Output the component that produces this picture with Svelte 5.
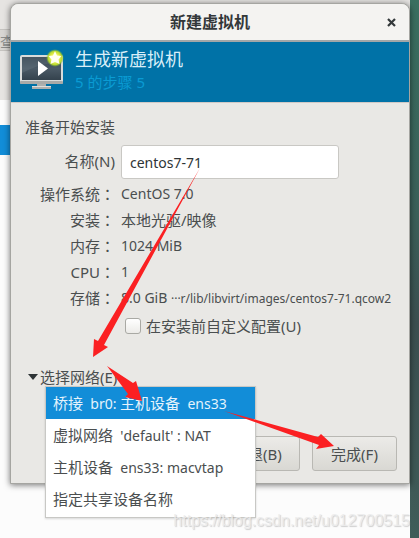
<script lang="ts">
  let name = $state("centos7-71");
  let customize = $state(false);
  let selected = $state(0);

  const details = [
    { label: "操作系统", value: "CentOS 7.0" },
    { label: "安装", value: "本地光驱/映像", cjk: true },
    { label: "内存", value: "1024 MiB" },
    { label: "CPU", value: "1" },
    { label: "存储", value: "8.0 GiB", path: "···r/lib/libvirt/images/centos7-71.qcow2" },
  ];

  const networks = [
    ["桥接", "  br0: ", "主机设备", "  ens33"],
    ["虚拟网络", "  'default' : NAT"],
    ["主机设备", "  ens33: macvtap"],
    ["指定共享设备名称"],
  ];
</script>

<div class="desktop">
  <div class="manager">
    <div class="toolbar"><div class="search">查</div></div>
    <div class="row"></div>
  </div>

  <div class="dialog">
    <header>
      <h1>新建虚拟机</h1>
      <button class="close" aria-label="关闭">
        <svg width="9" height="9" viewBox="0 0 9 9"><path d="M1 1 8 8M8 1 1 8" stroke="#33383a" stroke-width="2.2" /></svg>
      </button>
    </header>

    <div class="banner">
      <svg width="46" height="44" viewBox="0 0 46 44">
        <defs>
          <linearGradient id="screen" x1="0" y1="0" x2="0" y2="1">
            <stop offset="0" stop-color="#34434f" />
            <stop offset="0.5" stop-color="#4b5a66" />
            <stop offset="1" stop-color="#34424d" />
          </linearGradient>
          <radialGradient id="glow">
            <stop offset="0.4" stop-color="#f2f45c" />
            <stop offset="0.75" stop-color="#b9d92c" />
            <stop offset="1" stop-color="#6fb33a" stop-opacity="0" />
          </radialGradient>
        </defs>
        <rect x="0" y="7" width="43" height="29" rx="2" fill="#d9dbda" />
        <rect x="0" y="33" width="43" height="3" rx="1" fill="#a9aaa8" />
        <rect x="2" y="9" width="39" height="23" fill="url(#screen)" />
        <path d="M2 9H41V13Q19 16 2 25Z" fill="#70808b" opacity="0.3" />
        <path d="M18 13 28 20.500 18 28Z" fill="#fff" />
        <path d="M17 36H26V38H31V41H12V38H17Z" fill="#aeb0ae" />
        <rect x="12" y="38" width="19" height="1" fill="#dededc" />
        <circle cx="35" cy="10" r="9" fill="url(#glow)" />
        <path d="M35 3 37 7.500 41.500 8 38.500 11.500 39.500 16 35 14 30.500 16 31.500 11.500 28.500 8 33 7.500Z" fill="#fffff0" />
      </svg>
      <div>
        <h2>生成新虚拟机</h2>
        <p>5 的步骤 5</p>
      </div>
    </div>

    <form onsubmit={(e) => e.preventDefault()}>
      <h3>准备开始安装</h3>
      <div class="fields">
        <label for="vm-name">名称(N)</label>
        <input id="vm-name" class="entry" type="text" bind:value={name} />
        {#each details as item}
          <span class="key">{item.label}<span class="colon">：</span></span>
          <span class="value" class:cjk={item.cjk}>
            {item.value}
            {#if item.path}<small>{item.path}</small>{/if}
          </span>
        {/each}
      </div>

      <label class="check">
        <input type="checkbox" bind:checked={customize} />
        在安装前自定义配置(U)
      </label>

      <div class="network">
        <button type="button" class="expander">
          <svg width="10" height="6" viewBox="0 0 10 6"><path d="M0 0H10L5 6Z" fill="#2e3436" /></svg>
          选择网络(E)
        </button>
        <div class="menu">
          {#each networks as parts, i}
            <button type="button" class:active={selected === i} onclick={() => (selected = i)}>
              {#each parts as part, j}<span class:latin={j % 2 === 1}>{part}</span>{/each}
            </button>
          {/each}
        </div>
      </div>

      <footer>
        <button type="button">后退(B)</button>
        <button type="submit">完成(F)</button>
      </footer>
    </form>
  </div>

  <!-- annotation arrows -->
  <svg class="arrows" width="419" height="538" viewBox="0 0 419 538" fill="#fb2022">
    <path d="M200 168 104 345 108 347 93 357 94 339 98 341Z" />
    <path d="M107 366 133 383 136 381 142 401 125 397 128 394Z" />
    <path d="M224 411 318 437 321 434 334 446 316 449 319 445Z" />
  </svg>
  <div class="watermark">https://blog.csdn.net/u012700515</div>
</div>

<style>
  :global(body) {
    background: #fcfcfc;
  }

  .desktop {
    position: relative;
    display: grid;
    min-height: 100vh;
    overflow: hidden;
    background: linear-gradient(#3a6f60, #3b6059 40%, #3c4f50 60%, #3f5d59);
    color: #4a4e4f;
    font-family: "Noto Sans", "Noto Sans CJK SC", sans-serif;
    font-size: 15px;
    line-height: 26px;
  }

  .manager,
  .dialog {
    grid-area: 1 / 1;
  }

  .manager {
    margin-right: 9px;
    background: #fcfcfc;
  }

  .toolbar {
    box-sizing: border-box;
    height: 100px;
    padding-top: 29px;
    background: #e6e4e2;
  }

  .search {
    height: 20px;
    border: 1px solid #c5c3c0;
    border-left: 0;
    background: #d8d6d3;
    color: #8b8d8c;
    font-size: 14px;
    line-height: 24px;
  }

  .row {
    height: 30px;
    margin-top: 25px;
    background: #128dd8;
  }

  .dialog {
    align-self: start;
    margin: 3px 9px 0 10px;
    border: 1px solid #a5a5a1;
    border-radius: 8px 8px 0 0;
    background: #e9e8e5;
    box-shadow: 0 1px 6px rgba(0, 0, 0, 0.55);
  }

  h1,
  h2,
  h3,
  p {
    margin: 0;
    font-weight: normal;
  }

  button {
    font: inherit;
    color: inherit;
  }

  header {
    display: grid;
    grid-template-columns: 28px 1fr 28px;
    align-items: center;
    height: 36px;
    border-bottom: 2px solid #a3a7a8;
    border-radius: 8px 8px 0 0;
    background: #f4f3f1;
  }

  h1 {
    grid-column: 2;
    color: #33383a;
    font-size: 16px;
    font-weight: bold;
    text-align: center;
  }

  .close {
    display: flex;
    padding: 6px;
    border: 0;
    background: none;
  }

  .banner {
    display: flex;
    gap: 9px;
    height: 54px;
    padding: 6px 9px 0;
    border-bottom: 1px solid #d0c9c6;
    background: #0072a7;
  }

  h2 {
    color: #d9eef8;
    font-size: 18px;
    line-height: 22px;
  }

  p {
    color: #0a9bd3;
    line-height: 24px;
  }

  h3 {
    font-size: 15px;
  }

  form {
    padding: 11px 12px 12px 14px;
  }

  .fields {
    display: grid;
    grid-template-columns: 90px 1fr;
    grid-auto-rows: 26px;
    grid-template-rows: 36px;
    column-gap: 6px;
    align-items: center;
    margin-top: 5px;
    white-space: nowrap;
  }

  .fields label,
  .key {
    text-align: right;
  }

  .fields label {
    line-height: 32px;
    align-self: start;
  }

  .colon {
    font-family: "Noto Sans CJK TC", sans-serif;
  }

  .entry {
    box-sizing: border-box;
    align-self: start;
    width: 218px;
    height: 34px;
    margin: 0;
    padding: 0 8px;
    border: 1px solid #c9c8c4;
    border-radius: 3px;
    background: #fff;
    color: #2e3436;
    font: inherit;
    font-size: 14px;
  }

  .value {
    font-size: 14px;
  }

  .cjk {
    font-size: 15px;
  }

  small {
    font-size: 12px;
  }

  .check {
    display: flex;
    align-items: center;
    gap: 5px;
    margin: 2px 0 0 100px;
  }

  .check input {
    appearance: none;
    width: 16px;
    height: 16px;
    margin: 0;
    border: 1px solid #a9a9a4;
    border-radius: 3px;
    background: linear-gradient(#fff, #ecebe8);
  }

  .network {
    position: relative;
    margin-top: 25px;
  }

  .expander {
    display: flex;
    align-items: center;
    gap: 2px;
    margin-left: 3px;
    padding: 0;
    border: 0;
    background: none;
  }

  .menu {
    position: absolute;
    z-index: 1;
    top: 22px;
    left: 20px;
    display: flex;
    flex-direction: column;
    width: 209px;
    padding-bottom: 2px;
    border: 1px solid #c8c8c5;
    background: #fff;
    box-shadow: 0 1px 2px rgba(0, 0, 0, 0.15);
  }

  .menu button {
    height: 32px;
    padding: 0 7px;
    border: 0;
    background: none;
    text-align: left;
    white-space: nowrap;
  }

  .menu span {
    white-space: pre;
  }

  .latin {
    font-size: 14px;
  }

  .menu .active {
    background: #128dd8;
    color: #e4f3fc;
  }

  footer {
    display: flex;
    justify-content: flex-end;
    gap: 12px;
    margin-top: 46px;
  }

  footer button {
    width: 85px;
    height: 35px;
    padding: 0;
    border: 1px solid #b9b8b3;
    border-radius: 3px;
    background: linear-gradient(#ecebe8, #d9d8d3);
  }

  .arrows {
    position: absolute;
    z-index: 2;
    top: 0;
    left: 0;
    pointer-events: none;
  }

  .watermark {
    position: absolute;
    z-index: 3;
    right: 9px;
    bottom: 4px;
    color: rgba(236, 236, 236, 0.9);
    font-family: "Liberation Sans", sans-serif;
    font-size: 16px;
    text-shadow: 1px 1px 1px rgba(120, 120, 120, 0.35);
  }
</style>
